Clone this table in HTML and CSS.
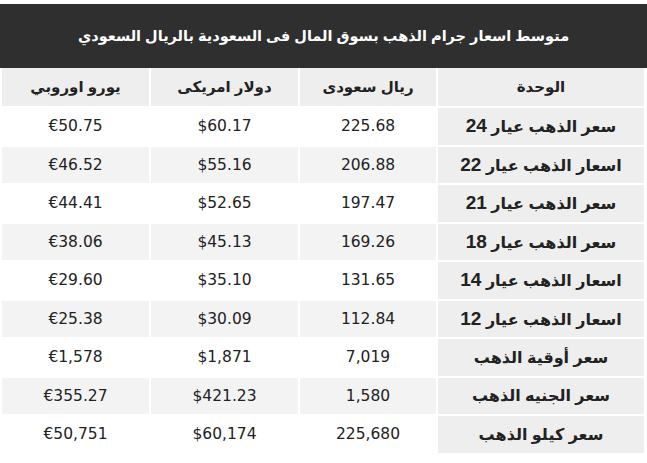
FILE: index.html
```html
<!DOCTYPE html>
<html lang="ar" dir="rtl">
<head>
<meta charset="utf-8">
<title>متوسط اسعار جرام الذهب</title>
<link rel="stylesheet" href="styles.css">
</head>
<body>
<div class="title">متوسط اسعار جرام الذهب بسوق المال فى السعودية بالريال السعودي</div>
<table class="prices">
  <colgroup>
    <col class="c-unit"><col class="c-sar"><col class="c-usd"><col class="c-eur">
  </colgroup>
  <thead>
    <tr><th>الوحدة</th><th>ريال سعودى</th><th>دولار امريكى</th><th>يورو اوروبي</th></tr>
  </thead>
  <tbody>
    <tr><td class="unit">سعر الذهب عيار <span class="k">24</span></td><td>225.68</td><td>$60.17</td><td>€50.75</td></tr>
    <tr><td class="unit">اسعار الذهب عيار <span class="k">22</span></td><td>206.88</td><td>$55.16</td><td>€46.52</td></tr>
    <tr><td class="unit">سعر الذهب عيار <span class="k">21</span></td><td>197.47</td><td>$52.65</td><td>€44.41</td></tr>
    <tr><td class="unit">سعر الذهب عيار <span class="k">18</span></td><td>169.26</td><td>$45.13</td><td>€38.06</td></tr>
    <tr><td class="unit">اسعار الذهب عيار <span class="k">14</span></td><td>131.65</td><td>$35.10</td><td>€29.60</td></tr>
    <tr><td class="unit">اسعار الذهب عيار <span class="k">12</span></td><td>112.84</td><td>$30.09</td><td>€25.38</td></tr>
    <tr><td class="unit">سعر أوقية الذهب</td><td>7,019</td><td>$1,871</td><td>€1,578</td></tr>
    <tr><td class="unit">سعر الجنيه الذهب</td><td>1,580</td><td>$421.23</td><td>€355.27</td></tr>
    <tr><td class="unit">سعر كيلو الذهب</td><td>225,680</td><td>$60,174</td><td>€50,751</td></tr>
  </tbody>
</table>
</body>
</html>
```
FILE: styles.css
```css
html, body {
  margin: 0;
  padding: 0;
  background: #fff;
}
body {
  font-family: Tahoma, "DejaVu Sans", sans-serif;
  color: #222;
}
.title {
  margin-top: 4px;
  height: 64px;
  display: flex;
  align-items: center;
  justify-content: center;
  background: #2f2f2f;
  color: #fff;
  font-family: "Liberation Sans", "DejaVu Sans", sans-serif;
  font-weight: bold;
  font-size: 14.5px;
}
.prices {
  width: 646px;
  margin-right: 1px;
  border-collapse: separate;
  border-spacing: 2px;
  table-layout: fixed;
  margin-top: -2px;
}
.c-unit { width: 206px; }
.c-sar { width: 136px; }
.c-usd { width: 147px; }
.c-eur { width: 147px; }
.prices th {
  height: 38px;
  padding: 0;
  background: #eeeeee;
  font-family: "Liberation Sans", "DejaVu Sans", sans-serif;
  font-weight: bold;
  font-size: 15px;
  text-align: center;
}
.prices td {
  height: 36.5px;
  padding: 0;
  text-align: center;
  font-size: 15.5px;
  background: #fff;
}
.prices tbody tr:nth-child(even) td {
  background: #f3f3f3;
}
.prices td.unit,
.prices tbody tr:nth-child(even) td.unit {
  background: #eeeeee;
  font-family: "Liberation Sans", "DejaVu Sans", sans-serif;
  font-weight: bold;
  font-size: 16px;
}
.prices .k {
  font-size: 19px;
}
```
